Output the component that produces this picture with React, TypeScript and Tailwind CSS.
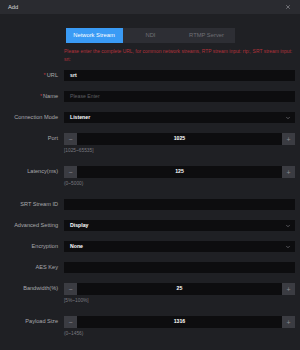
import { ChevronDown, X } from "lucide-react";

const font = { fontFamily: '"Liberation Sans", Arial, sans-serif' };

function Label({ text, required }: { text: string; required?: boolean }) {
  return (
    <div className="w-[59px] shrink-0 text-right text-[5.6px] leading-[11px] text-[#a9a9ad] pr-[1px]">
      {required && <span className="text-[#c4343c] mr-[1px]">*</span>}
      {text}
    </div>
  );
}

function TextRow({ label, value, placeholder, required }: { label: string; value?: string; placeholder?: string; required?: boolean }) {
  return (
    <div className="flex items-start gap-[5px] mb-[10px]">
      <Label text={label} required={required} />
      <div className="flex-1 h-[11px] bg-[#0d0d0f] flex items-center px-[6px] text-[5.2px]">
        {value ? (
          <span className="text-white font-bold">{value}</span>
        ) : (
          <span className="text-[#5d5d62]">{placeholder}</span>
        )}
      </div>
    </div>
  );
}

function SelectRow({ label, value }: { label: string; value: string }) {
  return (
    <div className="flex items-start gap-[5px] mb-[10px]">
      <Label text={label} />
      <div className="flex-1 h-[11px] bg-[#0d0d0f] flex items-center justify-between pl-[6px] pr-[4px] text-[5.2px]">
        <span className="text-white font-bold">{value}</span>
        <ChevronDown className="w-[6px] h-[6px] text-[#9a9aa0]" strokeWidth={2} />
      </div>
    </div>
  );
}

function StepperRow({ label, value, hint }: { label: string; value: string; hint: string }) {
  return (
    <div className="flex items-start gap-[5px] mb-[10px]">
      <Label text={label} />
      <div className="flex-1 flex flex-col">
        <div className="h-[12px] flex bg-[#0d0d0f]">
          <div className="w-[13px] bg-[#3b3c42] flex items-center justify-center text-[#8d8d93] text-[7px] leading-none">−</div>
          <div className="flex-1 flex items-center justify-center text-white font-bold text-[5.2px]">{value}</div>
          <div className="w-[13px] bg-[#3b3c42] flex items-center justify-center text-[#8d8d93] text-[7px] leading-none">+</div>
        </div>
        <div className="h-[11px] pt-[2px] text-[4.8px] leading-[7px] text-[#7a7a80]">{hint}</div>
      </div>
    </div>
  );
}

export default function App() {
  return (
    <div className="w-[300px] h-[350px] bg-[#1f2024] flex flex-col overflow-hidden" style={font}>
      <div className="h-[14px] bg-[#2a2b30] flex items-center justify-between pl-[8px] pr-[9px] shrink-0">
        <span className="text-[5.8px] text-[#d9d9dc]">Add</span>
        <X className="w-[6px] h-[6px] text-[#b5b5ba]" strokeWidth={2} />
      </div>

      <div className="flex justify-center mt-[14px]">
        <div className="flex h-[15px] bg-[#2d2e34] text-[5.8px]">
          <div className="w-[57px] bg-[#3a9bf5] text-white flex items-center justify-center">Network Stream</div>
          <div className="w-[56px] text-[#707076] flex items-center justify-center">NDI</div>
          <div className="w-[56px] text-[#707076] flex items-center justify-center">RTMP Server</div>
        </div>
      </div>

      <div className="pl-[64px] pr-[6px] mt-[5px] mb-[7px] text-[4.95px] leading-[7.5px] text-[#b3323b]">
        Please enter the complete URL, for common network streams, RTP stream input: rtp:, SRT stream input: srt:
      </div>

      <div className="pr-[5px]">
        <TextRow label="URL" value="srt" required />
        <TextRow label="Name" placeholder="Please Enter" required />
        <SelectRow label="Connection Mode" value="Listener" />
        <StepperRow label="Port" value="1025" hint="[1025~65535]" />
        <StepperRow label="Latency(ms)" value="125" hint="(0~5000)" />
        <TextRow label="SRT Stream ID" />
        <SelectRow label="Advanced Setting" value="Display" />
        <SelectRow label="Encryption" value="None" />
        <TextRow label="AES Key" />
        <StepperRow label="Bandwidth(%)" value="25" hint="[5%~100%]" />
        <StepperRow label="Payload Size" value="1316" hint="(0~1456)" />
      </div>
    </div>
  );
}
